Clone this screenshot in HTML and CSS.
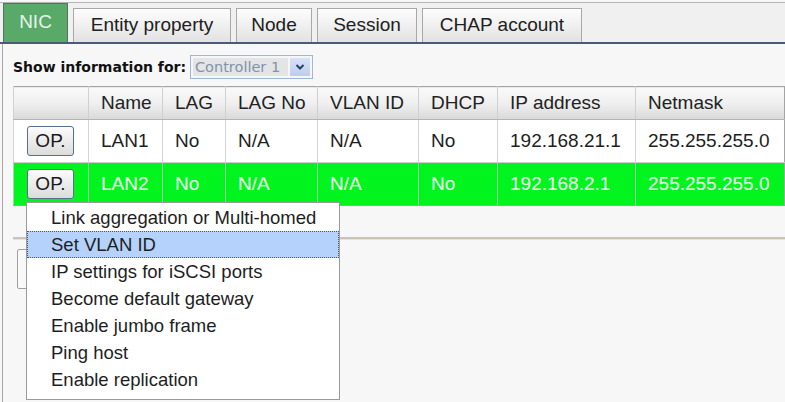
FILE: index.html
```html
<!DOCTYPE html>
<html>
<head>
<meta charset="utf-8">
<link rel="stylesheet" href="styles.css">
</head>
<body>
<div class="page">
  <div class="tabbar">
    <div class="tab active">NIC</div>
    <div class="tab">Entity property</div>
    <div class="tab">Node</div>
    <div class="tab">Session</div>
    <div class="tab">CHAP account</div>
  </div>
  <div class="panel">
    <div class="showfor">
      <span class="label">Show information for:</span>
      <div class="select">
        <span class="seltext">Controller 1</span>
        <span class="selbtn"><svg width="10" height="8" viewBox="0 0 10 8"><path d="M1.5 2 L5 5.5 L8.5 2" fill="none" stroke="#2a3f6a" stroke-width="2"/></svg></span>
      </div>
    </div>
    <table class="grid">
      <colgroup>
        <col class="c1"><col class="c2"><col class="c3"><col class="c4"><col class="c5"><col class="c6"><col class="c7"><col class="c8">
      </colgroup>
      <thead>
        <tr><th></th><th>Name</th><th>LAG</th><th>LAG No</th><th>VLAN ID</th><th>DHCP</th><th>IP address</th><th>Netmask</th></tr>
      </thead>
      <tbody>
        <tr><td class="opcell"><span class="op">OP.</span></td><td>LAN1</td><td>No</td><td>N/A</td><td>N/A</td><td>No</td><td>192.168.21.1</td><td>255.255.255.0</td></tr>
        <tr class="sel"><td class="opcell"><span class="op">OP.</span></td><td>LAN2</td><td>No</td><td>N/A</td><td>N/A</td><td>No</td><td>192.168.2.1</td><td>255.255.255.0</td></tr>
      </tbody>
    </table>
    <div class="sep"></div>
    <div class="btnrow"><span class="hiddenbtn"></span></div>
  </div>
  <div class="menu">
    <div class="item">Link aggregation or Multi-homed</div>
    <div class="item hl">Set VLAN ID</div>
    <div class="item">IP settings for iSCSI ports</div>
    <div class="item">Become default gateway</div>
    <div class="item">Enable jumbo frame</div>
    <div class="item">Ping host</div>
    <div class="item">Enable replication</div>
  </div>
</div>
</body>
</html>
```
FILE: styles.css
```css
html, body {
  margin: 0;
  padding: 0;
  background: #f7f7f7;
  overflow: hidden;
}
.page {
  position: relative;
  width: 785px;
  height: 402px;
  font-family: "Liberation Sans", Arial, sans-serif;
  color: #1e1e1e;
}
.tabbar {
  margin-top: 2px;
  height: 39px;
  border-top: 1px solid #b4b4b4;
  border-bottom: 2px solid #4c5a78;
  background: #f0f0f0;
  display: flex;
  align-items: flex-end;
  gap: 5px;
  padding-left: 3px;
}
.tab {
  height: 34px;
  box-sizing: border-box;
  border: 1px solid #a8a8a8;
  border-bottom: none;
  background: linear-gradient(#fdfdfd, #e2e2e2);
  font-size: 19px;
  display: flex;
  align-items: center;
  justify-content: center;
  padding-bottom: 2px;
  color: #202020;
}
.tab:nth-child(2) { width: 158px; }
.tab:nth-child(3) { width: 76px; }
.tab:nth-child(4) { width: 100px; }
.tab:nth-child(5) { width: 160px; }
.tab.active {
  width: 65px;
  height: 39px;
  background: #59a968;
  border: 1px solid #5e6c62;
  border-bottom: none;
  color: #e4f4e8;
  padding-bottom: 2px;
}
.panel {
  margin-left: 2px;
  border-left: 1px solid #a8a8a8;
  height: 359px;
  padding-left: 10px;
  box-sizing: border-box;
}
.showfor {
  height: 42px;
  display: flex;
  align-items: center;
  padding-top: 3px;
  box-sizing: border-box;
}
.label {
  font-family: "DejaVu Sans", Verdana, sans-serif;
  font-weight: bold;
  font-size: 14px;
  color: #111;
  width: 177px;
  letter-spacing: 0;
  white-space: nowrap;
}
.select {
  width: 123px;
  height: 24px;
  box-sizing: border-box;
  border: 1px solid #9fb6d8;
  background: #f4f6fa;
  display: flex;
  align-items: center;
  padding: 2px;
  gap: 2px;
}
.seltext {
  flex: 1;
  height: 18px;
  background: #e4e4e4;
  font-family: "DejaVu Sans", Verdana, sans-serif;
  font-size: 14.5px;
  color: #7f93ad;
  line-height: 18px;
  padding-left: 2px;
  white-space: nowrap;
  overflow: hidden;
}
.selbtn {
  width: 20px;
  height: 18px;
  background: linear-gradient(#d6e2f6, #bccdee);
  display: flex;
  align-items: center;
  justify-content: center;
}
.grid {
  border-collapse: collapse;
  table-layout: fixed;
  width: 771px;
  font-size: 19px;
  border: 1px solid #a4a4a4;
}
.c1 { width: 75px; }
.c2 { width: 74px; }
.c3 { width: 63px; }
.c4 { width: 92px; }
.c5 { width: 101px; }
.c6 { width: 79px; }
.c7 { width: 138px; }
.c8 { width: 149px; }
.grid th {
  height: 32px;
  font-weight: normal;
  text-align: left;
  padding: 0 0 0 12px;
  background: linear-gradient(#fafafa 0%, #efefef 50%, #d9d9d9 100%);
  border-left: 1px solid #d0d0d0;
  border-bottom: 1px solid #b4b4b4;
  color: #222;
}
.grid td {
  height: 42px;
  padding: 0 0 0 12px;
  border-left: 1px solid #d4d4d4;
  border-bottom: 1px solid #cdcdcd;
  background: #ffffff;
  white-space: nowrap;
  overflow: hidden;
}
.grid tr.sel td {
  background: #02f41e;
  color: #f2fff2;
  border-left-color: #9ee0a4;
  border-bottom-color: #a0a0a0;
}
.grid td.opcell {
  padding-left: 13px;
}
.op {
  display: inline-flex;
  align-items: center;
  justify-content: center;
  width: 47px;
  height: 30px;
  box-sizing: border-box;
  border: 1px solid #57708e;
  border-radius: 3px;
  background: linear-gradient(#fbfbfb, #dcdcdc);
  color: #1a1a1a;
  font-size: 19px;
  vertical-align: middle;
}
.sep {
  margin-top: 31px;
  height: 2px;
  background: #c9c4b6;
  border-bottom: 1px solid #e6e2d8;
}
.btnrow {
  padding-top: 9px;
  padding-left: 4px;
}
.hiddenbtn {
  display: block;
  width: 120px;
  height: 40px;
  box-sizing: border-box;
  border: 1px solid #a0a0a0;
  border-radius: 2px;
  background: linear-gradient(90deg, #fafafa, #d8d8d8);
}
.menu {
  position: absolute;
  left: 26px;
  top: 200px;
  width: 314px;
  height: 198px;
  box-sizing: border-box;
  border: 1px solid #9a9a9a;
  background: #ffffff;
  padding-top: 1px;
  font-size: 18.5px;
  color: #1e1e1e;
}
.item {
  height: 27px;
  line-height: 27px;
  padding-left: 24px;
  box-sizing: border-box;
  white-space: nowrap;
}
.item.hl {
  background: #b4d2fb;
  border: 1px dotted #555;
  line-height: 25px;
  padding-left: 23px;
}
```
